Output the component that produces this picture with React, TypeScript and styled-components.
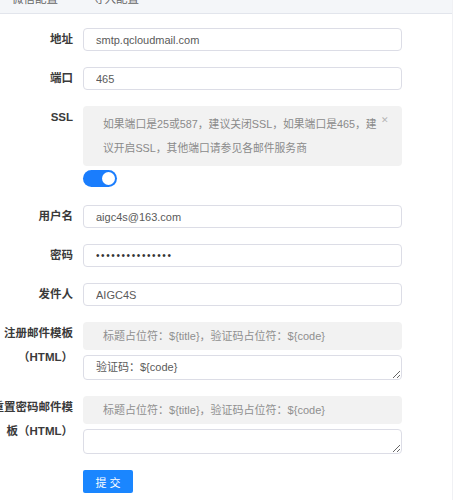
import React from 'react';
import styled, { createGlobalStyle } from 'styled-components';

const GlobalStyle = createGlobalStyle`
  html, body {
    margin: 0;
    padding: 0;
    background: #fff;
  }
  body {
    font-family: "Liberation Sans", "Noto Sans CJK SC", sans-serif;
    color: #333;
    overflow: hidden;
  }
`;

const Page = styled.div`
  width: 453px;
  height: 500px;
  overflow: hidden;
  box-sizing: border-box;
  border-right: 1px solid #f0f1f4;
`;

const TabBar = styled.div`
  display: flex;
  gap: 35px;
  height: 14px;
  padding-left: 12px;
  background: #f4f6f9;
  border-bottom: 1px solid #e2e5ec;
  box-sizing: border-box;
  overflow: hidden;
`;

const Tab = styled.div`
  margin-top: -13px;
  line-height: 24px;
  font-size: 11.5px;
  color: #666;
  white-space: nowrap;
`;

const Form = styled.form`
  padding-top: 14px;
`;

const Item = styled.div<{ $gap?: number }>`
  display: grid;
  grid-template-columns: 83px 319px;
  margin-bottom: ${(p) => (p.$gap ?? 16)}px;
`;

const Label = styled.div`
  display: flex;
  justify-content: flex-end;
  padding-right: 10px;
  min-width: 0;
`;

const LabelText = styled.span`
  font-size: 11.5px;
  font-weight: 600;
  line-height: 24px;
  color: #3a3a3a;
  text-align: right;
  white-space: nowrap;
  margin-top: -1px;
`;

const Control = styled.div`
  display: flex;
  flex-direction: column;
  min-width: 0;
`;

const Input = styled.input`
  box-sizing: border-box;
  width: 100%;
  height: 23px;
  margin: 0;
  padding: 0 12px;
  border: 1px solid #dcdde6;
  border-radius: 4px;
  font-family: "Liberation Sans", "Noto Sans CJK SC", sans-serif;
  font-size: 11px;
  color: #5a5a5a;
  background: #fff;
  outline: none;
`;

const PasswordInput = styled(Input)`
  letter-spacing: 1.6px;
  font-size: 10px;
  color: #333;
`;

const TextArea = styled.textarea`
  box-sizing: border-box;
  width: 100%;
  height: 25px;
  margin: 5px 0 0;
  padding: 4px 12px 0;
  border: 1px solid #dcdde6;
  border-radius: 4px;
  font-family: "Liberation Sans", "Noto Sans CJK SC", sans-serif;
  font-size: 11px;
  line-height: 15px;
  color: #5a5a5a;
  background: #fff;
  outline: none;
  resize: vertical;
  display: block;
`;

const Alert = styled.div`
  position: relative;
  box-sizing: border-box;
  padding: 6px 22px 6px 20px;
  background: #f2f2f2;
  border-radius: 4px;
  font-size: 10.8px;
  line-height: 24px;
  color: #8a8a8a;
  white-space: nowrap;
`;

const Close = styled.span`
  position: absolute;
  top: 10px;
  right: 13px;
  font-size: 9px;
  line-height: 9px;
  color: #b5b5b5;
`;

const Hint = styled.div`
  box-sizing: border-box;
  height: 28px;
  padding: 0 20px;
  background: #f2f2f2;
  border-radius: 4px;
  font-size: 11px;
  line-height: 28px;
  color: #8f8f8f;
  white-space: nowrap;
`;

const SwitchTrack = styled.div<{ $on: boolean }>`
  position: relative;
  width: 34px;
  height: 17px;
  margin: 4px 0 2px;
  border-radius: 9px;
  background: ${(p) => (p.$on ? '#1a7dfd' : '#c0c4cc')};
`;

const SwitchKnob = styled.span<{ $on: boolean }>`
  position: absolute;
  top: 2px;
  left: ${(p) => (p.$on ? '19px' : '2px')};
  width: 13px;
  height: 13px;
  border-radius: 50%;
  background: #fff;
`;

const SubmitButton = styled.button`
  width: 50px;
  height: 23px;
  padding: 0;
  border: none;
  border-radius: 2px;
  background: #1a86ff;
  color: #fff;
  font-family: "Liberation Sans", "Noto Sans CJK SC", sans-serif;
  font-size: 11px;
  letter-spacing: 3px;
  text-indent: 3px;
`;

const Field = ({ label, children, gap }: { label: React.ReactNode; children: React.ReactNode; gap?: number }) => (
  <Item $gap={gap}>
    <Label>
      <LabelText>{label}</LabelText>
    </Label>
    <Control>{children}</Control>
  </Item>
);

export default function App() {
  return (
    <Page>
      <GlobalStyle />
      <TabBar>
        <Tab>微信配置</Tab>
        <Tab>导入配置</Tab>
      </TabBar>
      <Form onSubmit={(e) => e.preventDefault()}>
        <Field label="地址">
          <Input defaultValue="smtp.qcloudmail.com" />
        </Field>
        <Field label="端口">
          <Input defaultValue="465" />
        </Field>
        <Field label="SSL">
          <Alert>
            如果端口是25或587，建议关闭SSL，如果端口是465，建
            <br />
            议开启SSL，其他端口请参见各邮件服务商
            <Close>✕</Close>
          </Alert>
          <SwitchTrack $on>
            <SwitchKnob $on />
          </SwitchTrack>
        </Field>
        <Field label="用户名">
          <Input defaultValue="aigc4s@163.com" />
        </Field>
        <Field label="密码">
          <PasswordInput type="password" defaultValue="aigc4s12345678x" />
        </Field>
        <Field label="发件人">
          <Input defaultValue="AIGC4S" />
        </Field>
        <Field
          label={
            <>
              注册邮件模板
              <br />
              （HTML）
            </>
          }
        >
          <Hint>标题占位符：${'{title}'}，验证码占位符：${'{code}'}</Hint>
          <TextArea defaultValue={'验证码：${code}'} />
        </Field>
        <Field
          label={
            <>
              重置密码邮件模
              <br />
              板（HTML）
            </>
          }
        >
          <Hint>标题占位符：${'{title}'}，验证码占位符：${'{code}'}</Hint>
          <TextArea defaultValue="" />
        </Field>
        <Field label="">
          <div>
            <SubmitButton type="submit">提交</SubmitButton>
          </div>
        </Field>
      </Form>
    </Page>
  );
}
